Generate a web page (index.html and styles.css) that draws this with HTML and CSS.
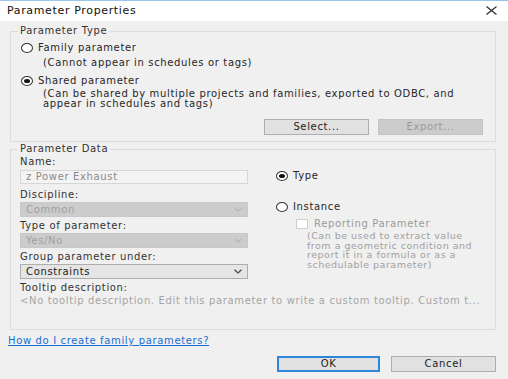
FILE: index.html
```html
<!DOCTYPE html>
<html>
<head>
<meta charset="utf-8">
<link rel="stylesheet" href="styles.css">
</head>
<body>
<div class="dialog">
  <div class="titlebar">
    <span class="title">Parameter Properties</span>
    <svg class="close" width="11" height="9" viewBox="0 0 11 9"><path d="M0.5 0.5L10.5 8.5M10.5 0.5L0.5 8.5" stroke="#333" stroke-width="1.3" fill="none"/></svg>
  </div>
  <div class="body">
    <fieldset class="group g1">
      <legend>Parameter Type</legend>
      <div class="radio-row r-family"><span class="radio"></span>Family parameter</div>
      <div class="note n-family">(Cannot appear in schedules or tags)</div>
      <div class="radio-row r-shared"><span class="radio checked"></span>Shared parameter</div>
      <div class="note n-shared">(Can be shared by multiple projects and families, exported to ODBC, and<br>appear in schedules and tags)</div>
      <div class="btn-row">
        <div class="btn">Select...</div>
        <div class="btn disabled">Export...</div>
      </div>
    </fieldset>
    <fieldset class="group g2">
      <legend>Parameter Data</legend>
      <div class="cols">
        <div class="left">
          <div class="lbl first">Name:</div>
          <div class="field input">z Power Exhaust</div>
          <div class="lbl l-disc">Discipline:</div>
          <div class="field select disabled"><span>Common</span><svg class="chev" width="8" height="5" viewBox="0 0 8 5"><path d="M0.5 0.8L4 4L7.5 0.8" stroke="#b5b5b5" stroke-width="1.1" fill="none"/></svg></div>
          <div class="lbl">Type of parameter:</div>
          <div class="field select disabled"><span>Yes/No</span><svg class="chev" width="8" height="5" viewBox="0 0 8 5"><path d="M0.5 0.8L4 4L7.5 0.8" stroke="#b5b5b5" stroke-width="1.1" fill="none"/></svg></div>
          <div class="lbl">Group parameter under:</div>
          <div class="field select active"><span>Constraints</span><svg class="chev" width="8" height="5" viewBox="0 0 8 5"><path d="M0.5 0.8L4 4L7.5 0.8" stroke="#444" stroke-width="1.2" fill="none"/></svg></div>
        </div>
        <div class="right">
          <div class="radio-row r-type"><span class="radio checked"></span>Type</div>
          <div class="radio-row r-inst"><span class="radio"></span>Instance</div>
          <div class="check-row"><span class="check"></span>Reporting Parameter</div>
          <div class="rdesc">(Can be used to extract value<br>from a geometric condition and<br>report it in a formula or as a<br>schedulable parameter)</div>
        </div>
      </div>
      <div class="lbl l-tip">Tooltip description:</div>
      <div class="tip">&lt;No tooltip description. Edit this parameter to write a custom tooltip. Custom t...</div>
    </fieldset>
    <a class="help" href="#">How do I create family parameters?</a>
    <div class="footer">
      <div class="btn ok">OK</div>
      <div class="btn cancel">Cancel</div>
    </div>
  </div>
</div>
</body>
</html>
```
FILE: styles.css
```css
html, body {
  margin: 0;
  padding: 0;
}
body {
  width: 508px;
  height: 379px;
  overflow: hidden;
  background: #f0f0f0;
  font-family: "DejaVu Sans", "Open Sans", sans-serif;
  font-size: 10px;
  letter-spacing: 0.65px;
  color: #262626;
}
.dialog {
  display: flex;
  flex-direction: column;
  height: 379px;
}
.titlebar {
  height: 20px;
  background: #ffffff;
  border-top: 1px solid #9cc4ea;
  display: flex;
  align-items: center;
  justify-content: space-between;
  padding: 0 11px 0 7px;
}
.title {
  font-size: 11px;
  color: #111;
  line-height: 12px;
}
.close {
  display: block;
  margin-top: -2px;
}
.body {
  padding: 5px 12px 0 10px;
  display: flex;
  flex-direction: column;
}
.group {
  margin: 0;
  border: 1px solid #dcdcdc;
  min-width: 0;
}
.group legend {
  padding: 0 2px;
  margin-left: -3px;
  line-height: 10px;
  color: #333;
}
.g1 {
  padding: 6px 12px 6px 10px;
}
.radio-row {
  display: flex;
  align-items: center;
  height: 12px;
  line-height: 12px;
}
.radio {
  width: 10px;
  height: 8px;
  border: 1px solid #333;
  border-radius: 50%;
  background: #fff;
  margin-right: 5px;
  display: flex;
  align-items: center;
  justify-content: center;
}
.radio.checked::after {
  content: "";
  width: 6px;
  height: 4px;
  border-radius: 50%;
  background: #111;
}
.note {
  line-height: 10px;
  padding-left: 22px;
}
.n-family { margin-top: 4px; }
.r-shared { margin-top: 7px; }
.n-shared { margin-top: 2px; }
.btn-row {
  display: flex;
  justify-content: flex-end;
  gap: 9px;
  margin-top: 10px;
}
.btn {
  width: 103px;
  height: 14px;
  border: 1px solid #adadad;
  background: #e1e1e1;
  display: flex;
  align-items: center;
  justify-content: center;
  color: #222;
  line-height: 12px;
}
.btn.disabled {
  background: #cccccc;
  border-color: #c4c4c4;
  color: #9a9a9a;
}
.g2 {
  margin-top: 2px;
  padding: 3px 12px 23px 9px;
}
.g2 legend {
  margin-left: -2px;
}
.cols {
  display: flex;
  gap: 28px;
}
.left {
  width: 228px;
  display: flex;
  flex-direction: column;
}
.lbl {
  line-height: 10px;
  margin-top: 4px;
  color: #333;
}
.lbl.first { margin-top: 0; }
.lbl.l-disc { margin-top: 6px; }
.field {
  box-sizing: border-box;
  height: 15px;
  margin-top: 2px;
  display: flex;
  align-items: center;
  justify-content: space-between;
  padding: 0 5px 0 5px;
  line-height: 12px;
}
.field.input {
  height: 14px;
  margin-top: 3px;
  border: 1px solid #d6d6d6;
  background: #f3f3f3;
  color: #8a8a8a;
}
.field.select.disabled {
  background: #cccccc;
  border: 1px solid #c8c8c8;
  color: #a0a0a0;
}
.field.select.active {
  background: #e5e5e5;
  border: 1px solid #adadad;
  color: #222;
}
.chev {
  display: block;
}
.right {
  display: flex;
  flex-direction: column;
  flex: 1;
}
.r-type { margin-top: 13px; }
.r-inst { margin-top: 19px; }
.check-row {
  display: flex;
  align-items: center;
  margin-top: 5px;
  margin-left: 20px;
  height: 11px;
  line-height: 11px;
  color: #9a9a9a;
}
.check {
  box-sizing: border-box;
  width: 12px;
  height: 10px;
  border: 1px solid #cfcfcf;
  background: #fff;
  margin-right: 6px;
}
.rdesc {
  margin-left: 31px;
  line-height: 9.5px;
  color: #a0a0a0;
  font-size: 9.5px;
  letter-spacing: 0.5px;
  margin-top: 2px;
}
.l-tip { margin-top: 4px; }
.tip {
  line-height: 10px;
  margin-top: 3px;
  color: #a5a5a5;
  white-space: nowrap;
}
.help {
  margin-top: 6px;
  margin-left: -2px;
  line-height: 10px;
  color: #1a6fd0;
  text-decoration: underline;
  align-self: flex-start;
}
.footer {
  display: flex;
  justify-content: flex-end;
  gap: 11px;
  margin-top: 10px;
}
.btn.ok {
  width: 99px;
  height: 12px;
  border: 2px solid #2f86d8;
}
.btn.cancel {
  width: 103px;
}
```
